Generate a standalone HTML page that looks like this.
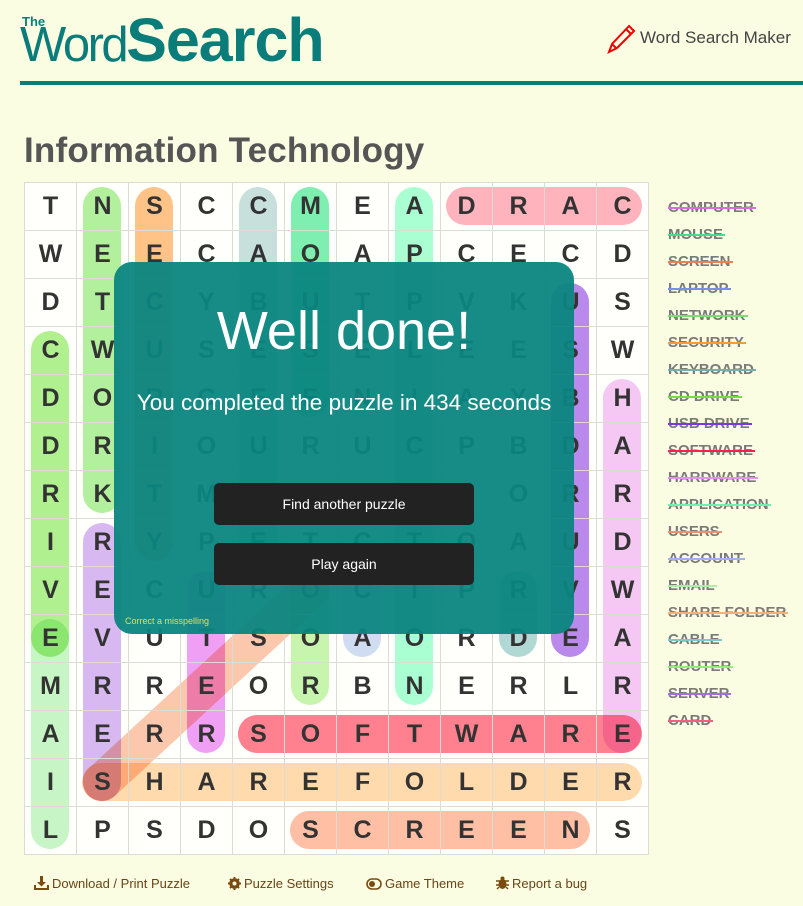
<!DOCTYPE html>
<html><head><meta charset="utf-8"><style>
*{margin:0;padding:0;box-sizing:border-box}
body{width:803px;height:906px;background:#fafde2;font-family:"Liberation Sans",sans-serif;position:relative;overflow:hidden}
.a{position:absolute}
#gbg{left:24px;top:182px;width:625px;height:673px;background:#fffffb}
.h{position:absolute;border-radius:19px;mix-blend-mode:multiply}
table{position:absolute;left:24px;top:182px;border-collapse:collapse}
td{width:52px;height:48px;border:1px solid #dcdcd4;text-align:center;font-size:25px;color:#333;font-weight:bold;padding:0}
.wl{position:absolute;left:668px;font-size:15px;color:#7a7a7a;font-weight:bold;line-height:17px}
.wl span{position:absolute;left:0;right:-2px;top:8px;height:2px}
.ft{position:absolute;top:876px;font-size:13px;color:#6a4416}
.ft svg{vertical-align:-2px;margin-right:3px}
</style></head><body>
<div class="a" style="left:22px;top:14px;color:#0a7c7a;font-size:13px;font-weight:bold">The</div>
<div class="a" style="left:20px;top:40px;color:#0a7c7a;white-space:nowrap;line-height:0"><span style="font-size:49px;letter-spacing:-2.5px">Word</span><span style="font-size:61px;font-weight:bold;letter-spacing:-1px">Search</span></div>
<svg class="a" style="left:605px;top:23px" width="32" height="32" viewBox="0 0 32 32"><g fill="none" stroke="#e00" stroke-width="2"><path d="M24 3l5 5L12 25l-8 4 3-8z"/><path d="M21 6l5 5M7 21l4 4"/></g></svg>
<div class="a" style="left:640px;top:28px;font-size:17px;color:#444">Word Search Maker</div>
<div class="a" style="left:20px;top:81px;width:783px;height:4px;background:#0a7c7a"></div>
<div class="a" style="left:24px;top:131px;font-size:35px;font-weight:bold;color:#555;letter-spacing:0.2px">Information Technology</div>
<div class="a" id="gbg"></div>
<div class="h" style="left:83px;top:187px;width:38px;height:326px;background:#b3f0a0"></div>
<div class="h" style="left:135px;top:187px;width:38px;height:374px;background:#ffc38a"></div>
<div class="h" style="left:239px;top:187px;width:38px;height:374px;background:#c8e0e0"></div>
<div class="h" style="left:291px;top:187px;width:38px;height:230px;background:#7eeeb4"></div>
<div class="h" style="left:395px;top:187px;width:38px;height:518px;background:#aaffd6"></div>
<div class="h" style="left:446px;top:187px;width:196px;height:38px;background:#ffb3c0"></div>
<div class="h" style="left:551px;top:283px;width:38px;height:374px;background:#b98af0"></div>
<div class="h" style="left:31px;top:331px;width:38px;height:326px;background:#b0f090"></div>
<div class="h" style="left:31px;top:619px;width:38px;height:230px;background:#c8f5c8"></div>
<div class="h" style="left:603px;top:379px;width:38px;height:374px;background:#f5c8f8"></div>
<div class="h" style="left:83px;top:523px;width:38px;height:278px;background:#d8b8f5"></div>
<div class="h" style="left:291px;top:571px;width:38px;height:134px;background:#c8f5b0"></div>
<div class="h" style="left:343px;top:571px;width:38px;height:86px;background:#d0dcf5"></div>
<div class="h" style="left:499px;top:571px;width:38px;height:86px;background:#b0d8d8"></div>
<div class="h" style="left:187px;top:571px;width:38px;height:182px;background:#f0a0f8"></div>
<div class="h" style="left:238px;top:715px;width:404px;height:38px;background:#ff8090"></div>
<div class="h" style="left:82px;top:763px;width:560px;height:38px;background:#ffdab0"></div>
<div class="h" style="left:290px;top:811px;width:300px;height:38px;background:#ffbfa8"></div>
<div class="h" style="left:45px;top:667px;width:322px;height:38px;background:#fcc8b0;transform:rotate(-42.7deg)"></div>
<table>
<tr><td>T</td><td>N</td><td>S</td><td>C</td><td>C</td><td>M</td><td>E</td><td>A</td><td>D</td><td>R</td><td>A</td><td>C</td></tr>
<tr><td>W</td><td>E</td><td>E</td><td>C</td><td>A</td><td>O</td><td>A</td><td>P</td><td>C</td><td>E</td><td>C</td><td>D</td></tr>
<tr><td>D</td><td>T</td><td>C</td><td>Y</td><td>B</td><td>U</td><td>T</td><td>P</td><td>V</td><td>K</td><td>U</td><td>S</td></tr>
<tr><td>C</td><td>W</td><td>U</td><td>S</td><td>E</td><td>S</td><td>E</td><td>L</td><td>E</td><td>E</td><td>S</td><td>W</td></tr>
<tr><td>D</td><td>O</td><td>R</td><td>C</td><td>E</td><td>E</td><td>N</td><td>I</td><td>A</td><td>Y</td><td>B</td><td>H</td></tr>
<tr><td>D</td><td>R</td><td>I</td><td>O</td><td>U</td><td>R</td><td>U</td><td>C</td><td>P</td><td>B</td><td>D</td><td>A</td></tr>
<tr><td>R</td><td>K</td><td>T</td><td>M</td><td>O</td><td>O</td><td>U</td><td>T</td><td>E</td><td>O</td><td>R</td><td>R</td></tr>
<tr><td>I</td><td>R</td><td>Y</td><td>P</td><td>E</td><td>T</td><td>C</td><td>T</td><td>O</td><td>A</td><td>U</td><td>D</td></tr>
<tr><td>V</td><td>E</td><td>C</td><td>U</td><td>R</td><td>O</td><td>C</td><td>T</td><td>P</td><td>R</td><td>V</td><td>W</td></tr>
<tr><td>E</td><td>V</td><td>U</td><td>T</td><td>S</td><td>O</td><td>A</td><td>O</td><td>R</td><td>D</td><td>E</td><td>A</td></tr>
<tr><td>M</td><td>R</td><td>R</td><td>E</td><td>O</td><td>R</td><td>B</td><td>N</td><td>E</td><td>R</td><td>L</td><td>R</td></tr>
<tr><td>A</td><td>E</td><td>R</td><td>R</td><td>S</td><td>O</td><td>F</td><td>T</td><td>W</td><td>A</td><td>R</td><td>E</td></tr>
<tr><td>I</td><td>S</td><td>H</td><td>A</td><td>R</td><td>E</td><td>F</td><td>O</td><td>L</td><td>D</td><td>E</td><td>R</td></tr>
<tr><td>L</td><td>P</td><td>S</td><td>D</td><td>O</td><td>S</td><td>C</td><td>R</td><td>E</td><td>E</td><td>N</td><td>S</td></tr>
</table>
<div class="a" style="left:114px;top:262px;width:460px;height:372px;background:#0b8580;opacity:0.95;border-radius:18px"></div>
<div class="a" style="left:114px;top:300px;width:460px;text-align:center;color:#fff;font-size:54px">Well done!</div>
<div class="a" style="left:114px;top:390px;width:460px;text-align:center;color:#fff;font-size:22.5px">You completed the puzzle in 434 seconds</div>
<div class="a" style="left:214px;top:483px;width:260px;height:42px;background:#222;border-radius:5px;color:#fff;font-size:14px;text-align:center;line-height:42px">Find another puzzle</div>
<div class="a" style="left:214px;top:543px;width:260px;height:42px;background:#222;border-radius:5px;color:#fff;font-size:14px;text-align:center;line-height:42px">Play again</div>
<div class="a" style="left:125px;top:616px;color:#e0e060;font-size:9px">Correct a misspelling</div>
<div class="wl" style="top:199px">COMPUTER<span style="background:#d86ce0"></span></div>
<div class="wl" style="top:226px">MOUSE<span style="background:#3ee08a"></span></div>
<div class="wl" style="top:253px">SCREEN<span style="background:#f08050"></span></div>
<div class="wl" style="top:280px">LAPTOP<span style="background:#7890e8"></span></div>
<div class="wl" style="top:307px">NETWORK<span style="background:#78e070"></span></div>
<div class="wl" style="top:334px">SECURITY<span style="background:#ff9a30"></span></div>
<div class="wl" style="top:361px">KEYBOARD<span style="background:#70b0b0"></span></div>
<div class="wl" style="top:388px">CD DRIVE<span style="background:#70e040"></span></div>
<div class="wl" style="top:415px">USB DRIVE<span style="background:#7a38e0"></span></div>
<div class="wl" style="top:442px">SOFTWARE<span style="background:#ff2050"></span></div>
<div class="wl" style="top:469px">HARDWARE<span style="background:#e890f0"></span></div>
<div class="wl" style="top:496px">APPLICATION<span style="background:#70f0b0"></span></div>
<div class="wl" style="top:523px">USERS<span style="background:#f09070"></span></div>
<div class="wl" style="top:550px">ACCOUNT<span style="background:#a0b0f0"></span></div>
<div class="wl" style="top:577px">EMAIL<span style="background:#a8f0a8"></span></div>
<div class="wl" style="top:604px">SHARE FOLDER<span style="background:#ffb070"></span></div>
<div class="wl" style="top:631px">CABLE<span style="background:#80c8c8"></span></div>
<div class="wl" style="top:658px">ROUTER<span style="background:#98e880"></span></div>
<div class="wl" style="top:685px">SERVER<span style="background:#a070e0"></span></div>
<div class="wl" style="top:712px">CARD<span style="background:#f06080"></span></div>
<div class="ft" style="left:34px"><svg width="15" height="14" viewBox="0 0 15 14"><path d="M6 0h3v6h3l-4.5 4.5L3 6h3zM0 9h2v3h11V9h2v5H0z" fill="#7a4a10"/></svg>Download / Print Puzzle</div>
<div class="ft" style="left:228px"><svg width="13" height="13" viewBox="0 0 13 13"><circle cx="6.5" cy="6.5" r="4" fill="none" stroke="#7a4a10" stroke-width="2.5"/><path d="M6.5 0v13M0 6.5h13M2 2l9 9M11 2l-9 9" stroke="#7a4a10" stroke-width="2"/><circle cx="6.5" cy="6.5" r="2" fill="#fafde2"/></svg>Puzzle Settings</div>
<div class="ft" style="left:366px"><svg width="16" height="12" viewBox="0 0 16 12"><rect x="1" y="1" width="14" height="10" rx="5" fill="none" stroke="#7a4a10" stroke-width="1.6"/><circle cx="6" cy="6" r="3" fill="#7a4a10"/></svg>Game Theme</div>
<div class="ft" style="left:496px"><svg width="13" height="14" viewBox="0 0 13 14"><ellipse cx="6.5" cy="8" rx="4" ry="5" fill="#7a4a10"/><circle cx="6.5" cy="2.5" r="2" fill="#7a4a10"/><path d="M0 5h13M0 9h13M1 13l2-2M12 13l-2-2" stroke="#7a4a10" stroke-width="1.4"/></svg>Report a bug</div>
</body></html>
